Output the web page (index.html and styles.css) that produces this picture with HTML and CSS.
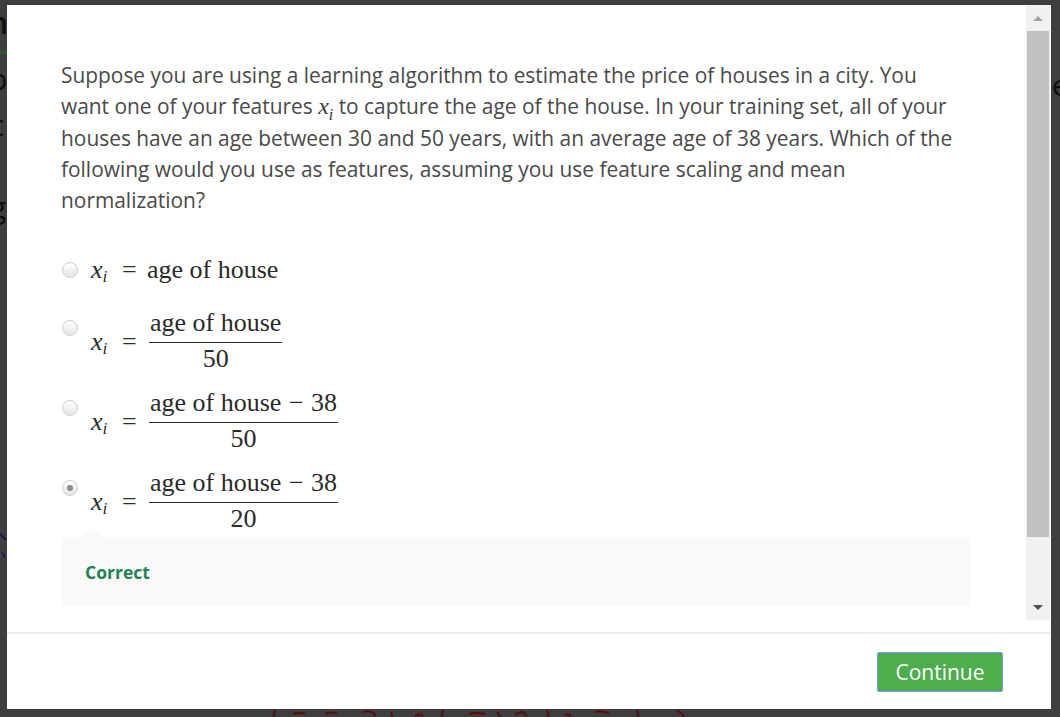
FILE: index.html
```html
<!DOCTYPE html>
<html lang="en">
<head>
<meta charset="utf-8">
<title>Quiz question</title>
<link rel="stylesheet" href="styles.css">
</head>
<body>
<div class="backdrop" aria-hidden="true">
  <span class="bg-l bg-n">n</span>
  <span class="bg-green"></span>
  <span class="bg-l bg-p">p</span>
  <span class="bg-l bg-c">c</span>
  <span class="bg-l bg-g">g</span>
  <span class="bg-r">e</span>
  <svg class="bg-blue" width="8" height="30" viewBox="0 0 8 30"><path d="M0 4 L6 10 M2 22 L5 28" stroke="#1a1a5a" stroke-width="2" fill="none"/></svg>
  <svg class="bg-red" width="440" height="10" viewBox="0 0 440 10"><path d="M10 2 L8 10 M28 6 Q34 4 40 6 M60 6 Q66 3 72 6 M98 4 Q104 2 110 6 L108 10 M126 4 L128 10 M150 8 L154 6 L158 8 M178 2 L176 10 M204 6 Q212 4 220 6 M232 4 L236 10 M250 6 L258 4 L262 8 M282 2 L284 10 M300 6 L306 8 M330 4 Q338 2 344 6 M372 2 L374 10 M412 2 Q418 6 420 10" stroke="#5a0b0b" stroke-width="2" fill="none"/></svg>
</div>

<div class="modal">
  <div class="body-row">
    <div class="scroll">
      <p class="question">Suppose you are using a learning algorithm to estimate the price of houses in a city. You want one of your features <span class="mi">x<sub>i</sub></span> to capture the age of the house. In your training set, all of your houses have an age between 30 and 50 years, with an average age of 38 years. Which of the following would you use as features, assuming you use feature scaling and mean normalization?</p>

      <div class="options">
        <div class="opt opt-inline">
          <span class="radio"></span>
          <span class="math"><span class="lhs">x<sub>i</sub></span><span class="eq">=</span><span class="mtext">age of house</span></span>
        </div>
        <div class="opt">
          <span class="radio"></span>
          <span class="math"><span class="lhs">x<sub>i</sub></span><span class="eq">=</span><span class="frac"><span class="num">age of house</span><span class="den">50</span></span></span>
        </div>
        <div class="opt">
          <span class="radio"></span>
          <span class="math"><span class="lhs">x<sub>i</sub></span><span class="eq">=</span><span class="frac"><span class="num">age of house <span class="op">−</span> 38</span><span class="den">50</span></span></span>
        </div>
        <div class="opt">
          <span class="radio checked"></span>
          <span class="math"><span class="lhs">x<sub>i</sub></span><span class="eq">=</span><span class="frac"><span class="num">age of house <span class="op">−</span> 38</span><span class="den">20</span></span></span>
        </div>
      </div>

      <div class="feedback">
        <span class="notch"></span>
        <span class="correct">Correct</span>
      </div>
    </div>
    <div class="scrollbar">
      <div class="sb-btn"><span class="arrow-up"></span></div>
      <div class="sb-track"><div class="sb-thumb"></div></div>
      <div class="sb-btn sb-down"><span class="arrow-down"></span></div>
    </div>
  </div>
  <div class="footer">
    <button class="continue" type="button">Continue</button>
  </div>
</div>
</body>
</html>
```
FILE: styles.css
```css
html, body {
  margin: 0;
  height: 100%;
}
body {
  background: #3e3e3e;
  position: relative;
  overflow: hidden;
  padding: 5px 9px 0 7px;
  box-sizing: border-box;
  font-family: "Open Sans", "Liberation Sans", sans-serif;
}

/* page behind the overlay */
.backdrop {
  position: absolute;
  inset: 0;
  z-index: 0;
}
.bg-l {
  position: absolute;
  color: #0e0e0e;
  font-family: "Open Sans", sans-serif;
  font-size: 30px;
  line-height: 1;
}
.bg-n { left: -11px; top: 8px; font-weight: 600; }
.bg-p { left: -11px; top: 64px; }
.bg-c { left: -10px; top: 110px; }
.bg-g { left: -10px; top: 192px; }
.bg-green {
  position: absolute;
  left: 0; top: 51px;
  width: 7px; height: 3px;
  background: #2d5a2d;
}
.bg-r {
  position: absolute;
  left: 1052px; top: 70px;
  color: #0e0e0e;
  font-size: 30px;
  line-height: 1;
}
.bg-blue { position: absolute; left: 0; top: 530px; }
.bg-red { position: absolute; left: 265px; top: 708px; }

/* modal */
.modal {
  position: relative;
  z-index: 1;
  width: 1044px;
  height: 704px;
  background: #fff;
  display: flex;
  flex-direction: column;
}
.body-row {
  display: flex;
  height: 615px;
}
.scroll {
  flex: 1;
  overflow: hidden;
  padding: 55px 0 14px 54px;
  box-sizing: border-box;
}
.question {
  margin: 0;
  width: 905px;
  font-size: 20.9px;
  line-height: 31.25px;
  color: #4a4a4a;
}
.question .mi {
  font-family: "Liberation Serif", "Times New Roman", serif;
  font-style: italic;
  font-size: 24px;
  color: #3a3a3a;
}
.question .mi sub {
  font-size: 16px;
  line-height: 0;
}

.options {
  margin-top: 39px;
  display: flex;
  flex-direction: column;
  gap: 12px;
}
.opt {
  display: flex;
  align-items: flex-start;
  gap: 13px;
}
.opt-inline {
  align-items: center;
  height: 30px;
  padding-bottom: 11px;
}
.radio {
  flex: none;
  width: 16px;
  height: 16px;
  margin-left: 1px;
  margin-top: 12px;
  box-sizing: border-box;
  border-radius: 50%;
  border: 1px solid #cfcfcf;
  background: linear-gradient(#ffffff, #e4e4e4);
  position: relative;
}
.opt-inline .radio { margin-top: 0; }
.radio.checked::after {
  content: "";
  position: absolute;
  left: 4px; top: 4px;
  width: 6px; height: 6px;
  border-radius: 50%;
  background: #8c8c8c;
}

.math {
  display: flex;
  align-items: center;
  font-family: "Liberation Serif", "Times New Roman", serif;
  font-size: 26px;
  color: #2b2b2b;
}
.lhs {
  font-style: italic;
  width: 31px;
}
.lhs sub {
  font-size: 17px;
  line-height: 0;
  vertical-align: -4px;
}
.eq {
  width: 25px;
  font-size: 26px;
}
.mtext { white-space: nowrap; }
.frac {
  display: flex;
  flex-direction: column;
  align-items: center;
  margin-left: 2px;
}
.num {
  line-height: 30px;
  padding: 0 1px 4px;
  white-space: nowrap;
  border-bottom: 1px solid #2b2b2b;
}
.op { padding: 0 1px; }
.den {
  line-height: 30px;
  padding-top: 1px;
  padding-bottom: 2px;
}

.feedback {
  position: relative;
  margin-top: 1px;
  width: 910px;
  height: 69px;
  background: #f9f9f9;
  display: flex;
  align-items: center;
  padding-left: 24px;
  box-sizing: border-box;
}
.notch {
  position: absolute;
  left: 17px;
  top: -7px;
  width: 0; height: 0;
  border-left: 13px solid transparent;
  border-right: 13px solid transparent;
  border-bottom: 7px solid #f9f9f9;
}
.correct {
  font-weight: 700;
  font-size: 17.5px;
  color: #1f8354;
}

/* scrollbar */
.scrollbar {
  flex: none;
  width: 24px;
  margin-right: 1px;
  display: flex;
  flex-direction: column;
  background: #f1f1f1;
}
.sb-btn {
  height: 26px;
  display: flex;
  align-items: center;
  justify-content: center;
}
.arrow-up {
  width: 0; height: 0;
  border-left: 5px solid transparent;
  border-right: 5px solid transparent;
  border-bottom: 5px solid #a3a3a3;
}
.arrow-down {
  width: 0; height: 0;
  border-left: 5px solid transparent;
  border-right: 5px solid transparent;
  border-top: 5px solid #505050;
}
.sb-track {
  flex: 1;
  padding: 0 1px;
}
.sb-thumb {
  height: 506px;
  background: #c1c1c1;
}

/* footer */
.footer {
  margin-top: 12px;
  border-top: 2px solid #ececec;
  flex: 1;
  display: flex;
  justify-content: flex-end;
  align-items: flex-start;
  padding: 18px 48px 0 0;
}
.continue {
  width: 126px;
  height: 40px;
  background: #4cae4c;
  border: 1px solid #6aa3ea;
  border-radius: 2px;
  color: #fff;
  font-family: "Open Sans", "Liberation Sans", sans-serif;
  font-size: 21px;
  padding: 0;
}
```
